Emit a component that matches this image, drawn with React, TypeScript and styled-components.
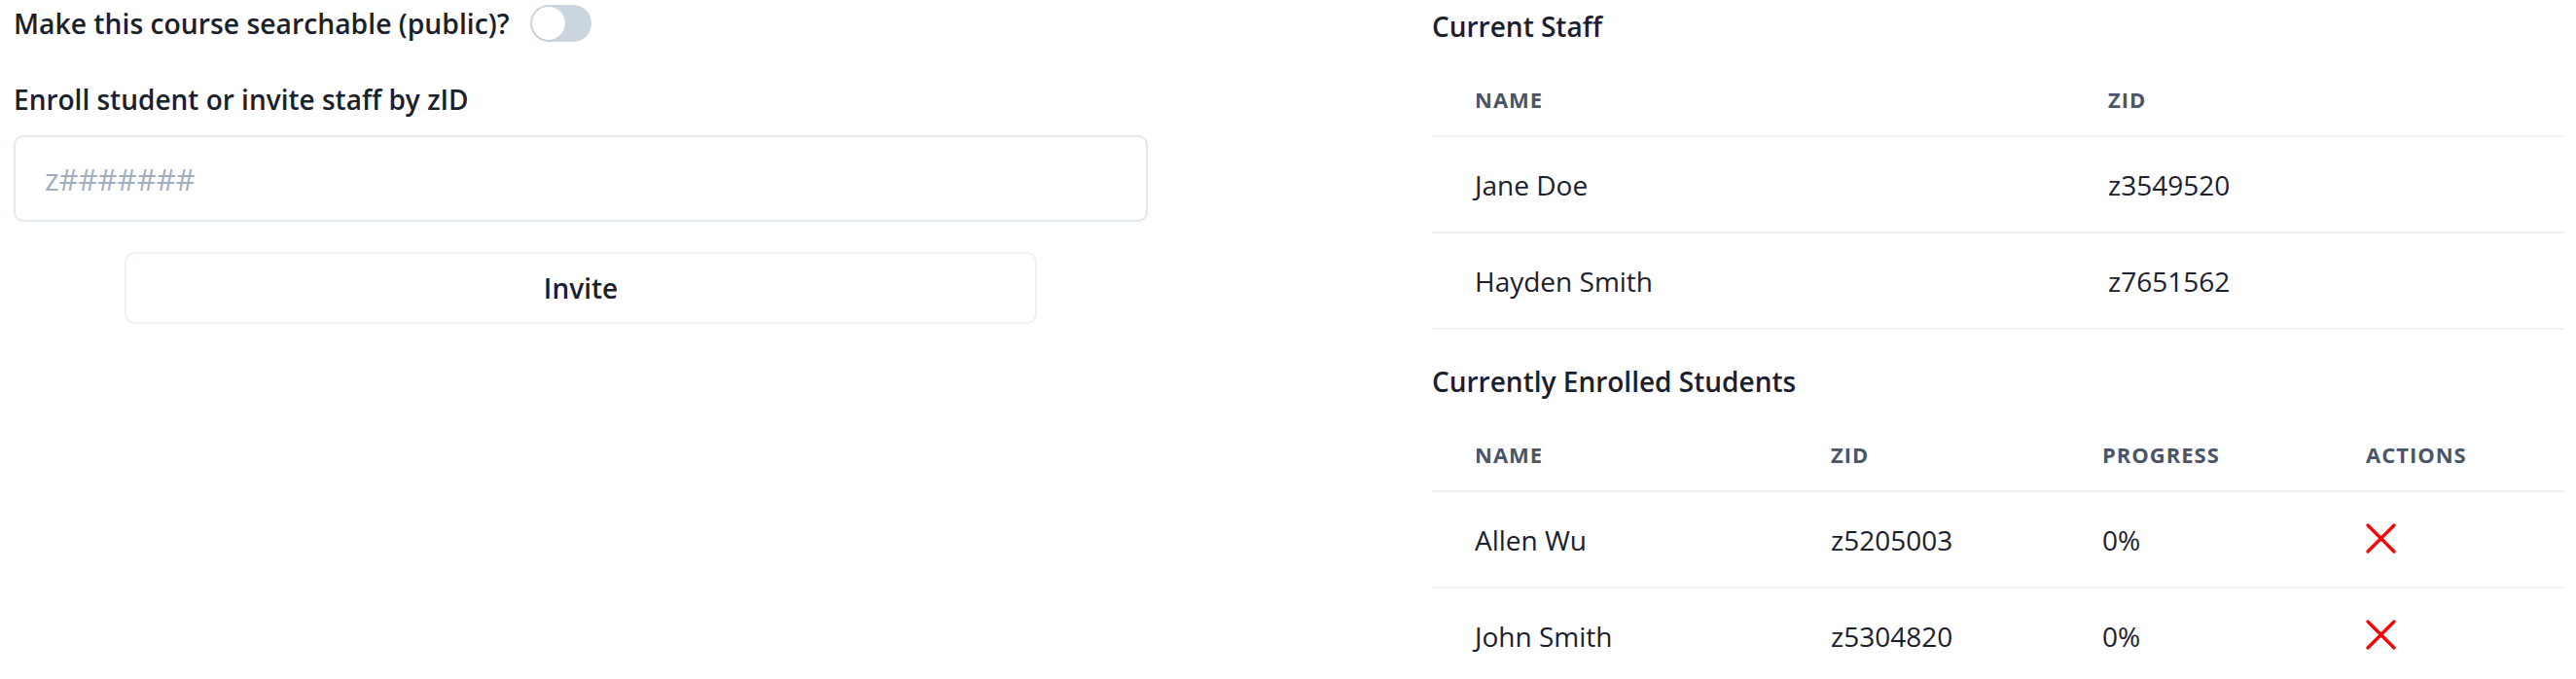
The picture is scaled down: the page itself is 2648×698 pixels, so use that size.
import React from "react";
import styled, { createGlobalStyle } from "styled-components";

const Global = createGlobalStyle`
  html, body { margin: 0; padding: 0; background: #ffffff; }
  body { font-family: "Open Sans", "Noto Sans", sans-serif; color: #1a202c; }
  * { box-sizing: border-box; }
`;

const Page = styled.div`
  width: 2648px;
  display: grid;
  grid-template-columns: 1166px 1164px;
  justify-content: space-between;
  padding: 5px 12px 0 14px;
`;

const Column = styled.section`
  display: flex;
  flex-direction: column;
  min-width: 0;
`;

const ToggleRow = styled.div`
  display: flex;
  align-items: center;
  gap: 21px;
  height: 38px;
`;

const Label = styled.div<{ $mt?: number; $size?: number }>`
  font-size: ${(p) => p.$size ?? 28}px;
  font-weight: 600;
  line-height: 38px;
  margin-top: ${(p) => p.$mt ?? 0}px;
  white-space: nowrap;
`;

const Track = styled.button`
  width: 63px;
  height: 38px;
  border: none;
  border-radius: 19px;
  background: #cbd5e0;
  padding: 2px;
  display: flex;
  align-items: center;
  cursor: pointer;
`;

const Knob = styled.span`
  width: 34px;
  height: 34px;
  border-radius: 50%;
  background: #ffffff;
  box-shadow: 0 1px 2px rgba(0, 0, 0, 0.06);
`;

const Input = styled.input`
  margin-top: 18px;
  height: 89px;
  width: 100%;
  border: 2px solid #e2e8f0;
  border-radius: 10px;
  padding: 0 30px;
  font-family: inherit;
  font-size: 31px;
  color: #1a202c;
  outline: none;
  &::placeholder { color: #a0aec0; }
`;

const InviteButton = styled.button`
  margin-top: 31px;
  align-self: center;
  width: 938px;
  height: 74px;
  border: 2px solid #edf2f7;
  border-radius: 10px;
  background: #ffffff;
  font-family: inherit;
  font-size: 28px;
  font-weight: 600;
  color: #1a202c;
  cursor: pointer;
`;

const SectionTitle = styled.h2<{ $mt: number }>`
  margin: ${(p) => p.$mt}px 0 18px;
  font-size: 28px;
  font-weight: 600;
  line-height: 38px;
  color: #1a202c;
`;

const Table = styled.table`
  width: 100%;
  border-collapse: collapse;
  table-layout: fixed;
`;

const Col = styled.col<{ $w?: number }>`
  width: ${(p) => (p.$w ? `${p.$w}px` : "auto")};
`;

const HeadCell = styled.th`
  height: 76px;
  padding: 0 0 0 44px;
  text-align: left;
  vertical-align: middle;
  font-size: 22px;
  font-weight: 700;
  letter-spacing: 1px;
  text-transform: uppercase;
  color: #4a5568;
  border-bottom: 2px solid #edf2f7;
`;

const Cell = styled.td`
  height: 99px;
  padding: 0 0 0 44px;
  vertical-align: middle;
  font-size: 28px;
  font-weight: 400;
  color: #1a202c;
  border-bottom: 2px solid #edf2f7;
  white-space: nowrap;
`;

const RemoveButton = styled.button`
  border: none;
  background: none;
  padding: 0;
  display: block;
  cursor: pointer;
`;

const CrossIcon = () => (
  <svg width="31" height="31" viewBox="0 0 31 31">
    <path d="M2 2 L29 29 M29 2 L2 29" stroke="#ff0000" strokeWidth="3.2" strokeLinecap="round" fill="none" />
  </svg>
);

const staff = [
  { name: "Jane Doe", zid: "z3549520" },
  { name: "Hayden Smith", zid: "z7651562" },
];

const students = [
  { name: "Allen Wu", zid: "z5205003", progress: "0%" },
  { name: "John Smith", zid: "z5304820", progress: "0%" },
];

export default function App() {
  return (
    <>
      <Global />
      <Page>
        <Column>
          <ToggleRow>
            <Label $size={28.3}>Make this course searchable (public)?</Label>
            <Track aria-label="toggle searchable">
              <Knob />
            </Track>
          </ToggleRow>
          <Label $mt={40}>Enroll student or invite staff by zID</Label>
          <Input placeholder="z#######" />
          <InviteButton>Invite</InviteButton>
        </Column>
        <Column>
          <SectionTitle $mt={3}>Current Staff</SectionTitle>
          <Table>
            <colgroup>
              <Col $w={651} />
              <Col />
            </colgroup>
            <thead>
              <tr>
                <HeadCell>Name</HeadCell>
                <HeadCell>zID</HeadCell>
              </tr>
            </thead>
            <tbody>
              {staff.map((s) => (
                <tr key={s.zid}>
                  <Cell>{s.name}</Cell>
                  <Cell>{s.zid}</Cell>
                </tr>
              ))}
            </tbody>
          </Table>
          <SectionTitle $mt={34}>Currently Enrolled Students</SectionTitle>
          <Table>
            <colgroup>
              <Col $w={366} />
              <Col $w={279} />
              <Col $w={271} />
              <Col />
            </colgroup>
            <thead>
              <tr>
                <HeadCell>Name</HeadCell>
                <HeadCell>zID</HeadCell>
                <HeadCell>Progress</HeadCell>
                <HeadCell>Actions</HeadCell>
              </tr>
            </thead>
            <tbody>
              {students.map((s) => (
                <tr key={s.zid}>
                  <Cell>{s.name}</Cell>
                  <Cell>{s.zid}</Cell>
                  <Cell>{s.progress}</Cell>
                  <Cell>
                    <RemoveButton aria-label={`remove ${s.name}`}>
                      <CrossIcon />
                    </RemoveButton>
                  </Cell>
                </tr>
              ))}
            </tbody>
          </Table>
        </Column>
      </Page>
    </>
  );
}
